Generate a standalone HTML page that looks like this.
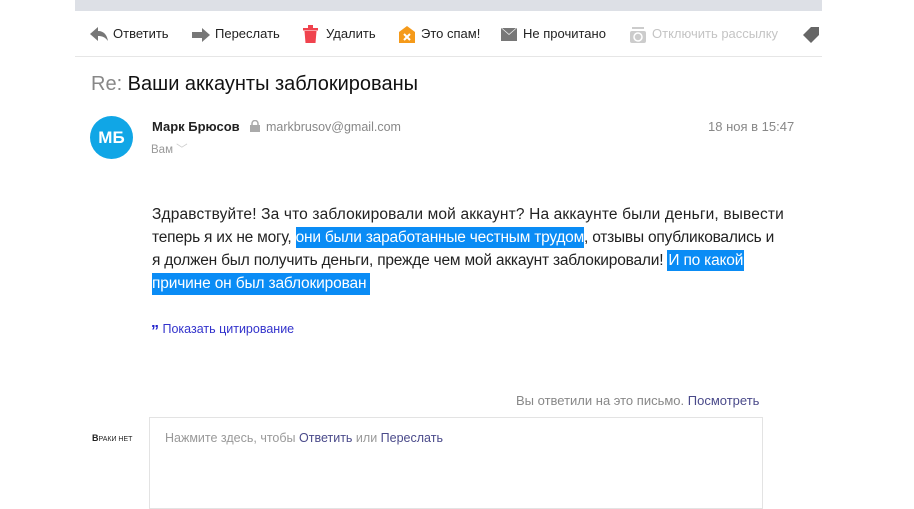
<!DOCTYPE html>
<html><head><meta charset="utf-8"><style>
body{margin:0;width:914px;height:502px;background:#fff;font-family:"Liberation Sans",Arial,sans-serif;position:relative;overflow:hidden}
.a{position:absolute;white-space:nowrap}
.tb{font-size:13px;color:#222;top:26px}
.hl{background:#0a8cf5;color:#fff}
.ln{font-size:15.5px;color:#222;left:152px;letter-spacing:0.15px}
</style></head><body>
<div class="a" style="left:75px;top:0;width:747px;height:11px;background:#dde0e6"></div>
<div class="a" style="left:75px;top:56px;width:747px;height:1px;background:#e6e6e6"></div>
<svg class="a" style="left:90px;top:27px" width="18" height="16"><path d="M0 7 L8 0 V4 C14 4 17 8 18 14 C15 10 12 9 8 9 V14 Z" fill="#777"/></svg>
<div class="a tb" style="left:113px">Ответить</div>
<svg class="a" style="left:192px;top:28px" width="18" height="14"><path d="M0 4 H10 V0 L18 7 L10 14 V10 H0 Z" fill="#777"/></svg>
<div class="a tb" style="left:215px">Переслать</div>
<svg class="a" style="left:303px;top:25px" width="15" height="18"><rect x="0" y="3" width="15" height="2.5" fill="#f0434e"/><rect x="5" y="0" width="5" height="3" fill="#f0434e"/><path d="M1.5 6 H13.5 L12.5 18 H2.5 Z" fill="#f0434e"/></svg>
<div class="a tb" style="left:326px">Удалить</div>
<svg class="a" style="left:399px;top:26px" width="16" height="17"><path d="M0 6 L8 0 L16 6 V17 H0 Z" fill="#f59a1a"/><path d="M5 8 L11 14 M11 8 L5 14" stroke="#fff" stroke-width="2"/></svg>
<div class="a tb" style="left:421px">Это спам!</div>
<svg class="a" style="left:501px;top:28px" width="16" height="13"><rect width="16" height="13" fill="#777"/><path d="M0 0 L8 7 L16 0" fill="#fff" opacity=".9"/><path d="M1 0 L8 6 L15 0 Z" fill="#777"/></svg>
<div class="a tb" style="left:523px">Не прочитано</div>
<svg class="a" style="left:630px;top:26px" width="16" height="17"><rect x="2" y="1" width="12" height="2" fill="#ccc"/><rect x="0" y="5" width="16" height="12" rx="2" fill="#ccc"/><circle cx="8" cy="11" r="4" fill="none" stroke="#fff" stroke-width="1.5"/></svg>
<div class="a tb" style="left:652px;color:#c4c4c4">Отключить рассылку</div>
<svg class="a" style="left:803px;top:27px" width="16" height="16"><path d="M8 0 H16 V8 L8 16 L0 8 Z" fill="#666"/></svg>
<div class="a" style="left:91px;top:73px;font-size:20px;color:#111"><span style="color:#888">Re:</span> Ваши аккаунты заблокированы</div>
<div class="a" style="left:90px;top:116px;width:43px;height:43px;border-radius:50%;background:#10a6e6;color:#fff;font-weight:bold;font-size:17px;text-align:center;line-height:43px">МБ</div>
<div class="a" style="left:152px;top:119px;font-size:13px;font-weight:bold;color:#222">Марк Брюсов</div>
<svg class="a" style="left:250px;top:120px" width="10" height="12"><rect x="0" y="5" width="10" height="7" fill="#aaa"/><path d="M2 5 V3.5 A3 3 0 0 1 8 3.5 V5" stroke="#aaa" fill="none" stroke-width="1.5"/></svg>
<div class="a" style="left:266px;top:120px;font-size:12.5px;color:#888">markbrusov@gmail.com</div>
<div class="a" style="left:151px;top:141px;font-size:11.5px;color:#999">Вам <span style="color:#ccc">﹀</span></div>
<div class="a" style="left:708px;top:119px;font-size:13px;color:#888">18 ноя в 15:47</div>
<div class="a ln" style="top:206px">Здравствуйте! За что заблокировали мой аккаунт? На аккаунте были деньги, вывести</div>
<div class="a ln" style="top:229px;letter-spacing:-0.22px">теперь я их не могу, <span class="hl" style="padding:2px 0">они были заработанные честным трудом</span>, отзывы опубликовались и</div>
<div class="a ln" style="top:252px;letter-spacing:-0.2px">я должен был получить деньги, прежде чем мой аккаунт заблокировали! <span class="hl" style="padding:2px 1px">И по какой</span></div>
<div class="a ln" style="top:275px;letter-spacing:-0.15px"><span class="hl" style="padding:2px 4px 3px 0">причине он был заблокирован </span></div>
<div class="a" style="left:151px;top:322px;font-size:12.5px;color:#3333cc"><b style="color:#22c;font-size:16px;line-height:12px;vertical-align:-3px">”</b> Показать цитирование</div>
<div class="a" style="left:516px;top:393px;font-size:13px;color:#888">Вы ответили на это письмо. <span style="color:#4a4a8a">Посмотреть</span></div>
<div class="a" style="left:92px;top:433px;font-size:7px;color:#222"><b style="font-size:9px">B</b>РАКИ НЕТ</div>
<div class="a" style="left:149px;top:417px;width:612px;height:90px;border:1px solid #e3e3e3"></div>
<div class="a" style="left:165px;top:431px;font-size:12.5px;color:#999">Нажмите здесь, чтобы <span style="color:#4a4a8a">Ответить</span> или <span style="color:#4a4a8a">Переслать</span></div>
</body></html>
